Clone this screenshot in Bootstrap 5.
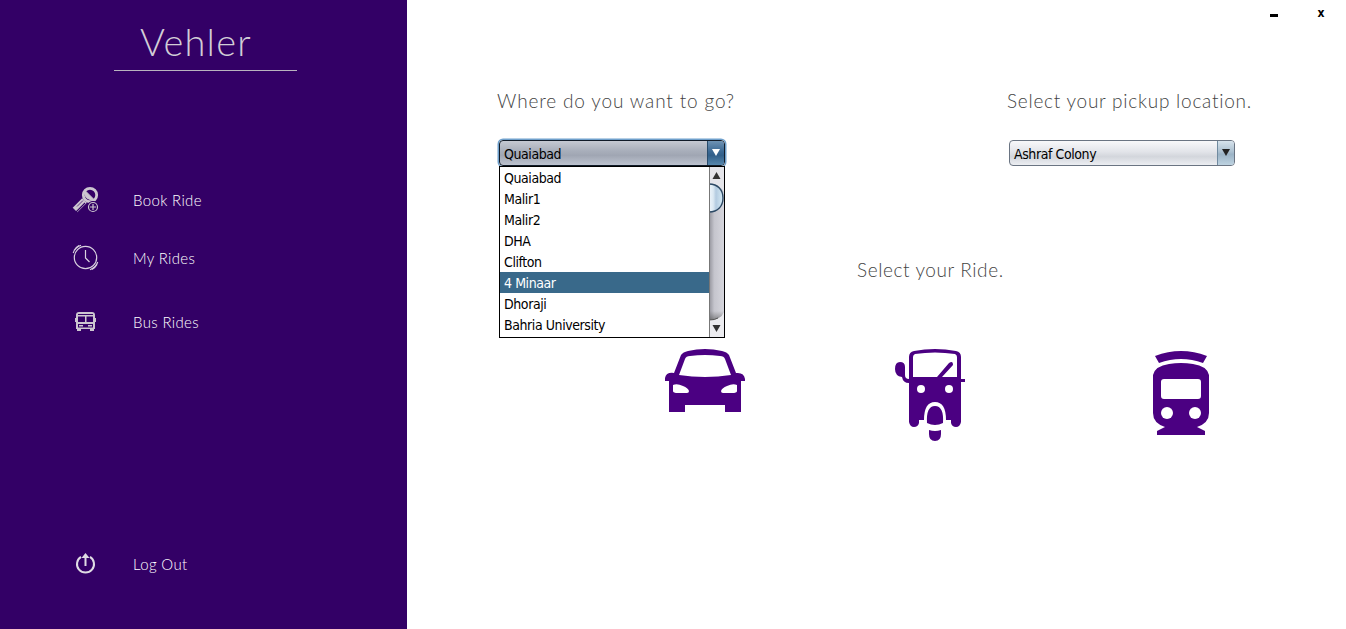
<!DOCTYPE html>
<html lang="en">
<head>
<meta charset="utf-8">
<meta name="viewport" content="width=device-width, initial-scale=1">
<title>Vehler</title>
<link href="https://cdn.jsdelivr.net/npm/bootstrap@5.3.0/dist/css/bootstrap.min.css" rel="stylesheet">
<style>
  body { font-family: Lato, "Liberation Sans", sans-serif; height: 629px; line-height: 1; }
  .sidebar { width: 407px; background: #330066; color: #fff; }
  .brand { width: 183px; height: 71px; margin-left: 114px; padding: 20px 0 0 26px; border-bottom: 1px solid #b9b3bf; color: #d2cdd6; font-size: 38px; line-height: 42px; font-weight: 300; letter-spacing: 1.2px; }
  .side-link { height: 28px; padding-left: 72px; color: #fff; font-size: 15px; font-weight: 300; letter-spacing: .35px; text-decoration: none; }
  .side-link svg { width: 28px; height: 28px; margin-right: 33px; flex: none; }
  .gap-a { margin-top: 115px; } .gap-b { margin-top: 30px; } .gap-c { margin-top: 36px; } .gap-d { margin-top: 214px; }
  .main-pane { min-width: 0; }
  .titlebar { height: 26px; padding-right: 20px; }
  .titlebar button { font: bold 12px/26px "DejaVu Sans Condensed", sans-serif; width: 10px; color: #000; }
  .btn-min { margin-right: 36px; }
  .min-mark { width: 8px; height: 3px; margin-top: 4px; background: #000; }
  .prompt { font-size: 19px; line-height: 24px; font-weight: 300; color: #444; white-space: nowrap; margin: 0; letter-spacing: .85px; }
  .prompt-pickup { letter-spacing: .75px; }
  .prompt-ride { padding-left: 450px; letter-spacing: .6px; }
  .fields { height: 232px; padding: 63px 0 0 90px; }
  .field { width: 510px; }
  .field-last { width: 250px; }
  .combo { width: 226px; height: 26px; margin: 27px 0 0 2px; border: 1px solid #6a7482; border-radius: 4px; background: linear-gradient(#f8f8fa, #e2e4e9 45%, #d3d6dc 65%, #eceef2); font: 14px/26px "DejaVu Sans Condensed", sans-serif; letter-spacing: -.42px; color: #000; padding-left: 4px; white-space: nowrap; }
  .combo .arrow { width: 17px; border-left: 1px solid #718ba0; border-radius: 0 3px 3px 0; background: linear-gradient(#d7e3ec, #abc0d0 45%, #9bb3c6 55%, #bed3e1); }
  .combo.is-open { border-color: #111b28; background: linear-gradient(#c5c9d2, #a9afbb 40%, #a0a6b3 60%, #bdc3cf); box-shadow: 0 0 0 1.5px #6fa0cc; }
  .combo.is-open .arrow { background: linear-gradient(#6f93b4, #396792 45%, #315f89 60%, #5687ad); border-color: #284b6b; }
  .options { top: 25px; left: -1px; width: 226px; height: 172px; border: 1px solid #000; background: #fff; z-index: 2; }
  .options li { height: 21px; line-height: 23px; padding-left: 4px; }
  .options li.chosen { background: #39698a; color: #fff; }
  .track { width: 15px; flex: none; }
  .rides { height: 94px; margin-top: 65px; padding-left: 258px; }
  .rides svg { fill: #4b0082; flex: none; }
  .ride-car { margin-top: 2px; } .ride-rickshaw { margin-left: 150px; } .ride-train { margin-left: 188px; }
</style>
</head>
<body class="d-flex overflow-hidden bg-white m-0">
<aside class="sidebar d-flex flex-column h-100 flex-shrink-0">
  <div class="brand">Vehler</div>
  <a class="side-link gap-a d-flex align-items-center" href="#">
    <svg viewBox="0 0 28 28"><g fill="none" stroke="#ccc6d0"><circle cx="18" cy="9" r="6.7" stroke-width="2.8" fill="#330066"/><path d="M13 4.5Q11 14 22.5 14L13 4.5z" fill="#ccc6d0"/><path d="M12.5 14.5L3 24" stroke-width="6.5"/><path d="M13 17L4 26" stroke="#330066" stroke-width="1.1"/><path d="M11 14.5L5 20.5" stroke="#330066" stroke-width=".7"/><circle cx="21" cy="21" r="5.6" fill="#330066" stroke="#330066"/><circle cx="21" cy="21" r="4.5" stroke-width="1.2"/><path d="M18 21h6M21 18v6" stroke-width="1.2"/></g></svg>
    <span>Book Ride</span></a>
  <a class="side-link gap-b d-flex align-items-center" href="#">
    <svg viewBox="0 0 28 28" fill="none" stroke="#d9d2df" stroke-width="1.2"><circle cx="13.5" cy="13.5" r="11.2"/><path d="M13.5 6v8l4 4M1.2 9Q3 3.5 9 1.3M2 6.5Q4 3 7 1.5M25.7 18Q24 23.5 18 25.7M25 20.5Q23 24 20 25.5"/></svg>
    <span>My Rides</span></a>
  <a class="side-link gap-c d-flex align-items-center" href="#">
    <svg viewBox="0 0 28 28"><path fill="#ccc6d0" fill-rule="evenodd" d="M7 4h13q3 0 3 3v3h1v4h-1v7h-1v2h-4v-2H9v2H5v-2H4v-7H3v-4h1V7q0-3 3-3zM6 6v1h15V6zM6 8.5V14h7V8.5zM14.5 8.5V14H21V8.5zM6 16v3.5h15V16zM7 17h4v1.5H7zM16 17h4v1.5h-4z"/></svg>
    <span>Bus Rides</span></a>
  <a class="side-link gap-d d-flex align-items-center" href="#">
    <svg viewBox="0 0 28 28"><path d="M9 6.9A8.5 8.5 0 1 0 18 6.9M13.5 16V6" fill="none" stroke="#e0dce4" stroke-width="2"/><path d="M13.5 3l4 5h-8z" fill="#e0dce4"/></svg>
    <span>Log Out</span></a>
</aside>
<main class="main-pane flex-grow-1">
  <div class="titlebar d-flex justify-content-end align-items-center">
    <button class="btn btn-min p-0 border-0 d-flex align-items-center" aria-label="Minimize"><span class="min-mark"></span></button>
    <button class="btn p-0 border-0">x</button>
  </div>
  <section class="fields d-flex">
    <div class="field flex-shrink-0">
      <h1 class="prompt">Where do you want to go?</h1>
      <div class="combo is-open position-relative d-flex justify-content-between">
        <span>Quaiabad</span>
        <span class="arrow d-flex align-items-center justify-content-center"><svg width="8" height="8"><path d="M0 0h8L4 7z" fill="#fff"/></svg></span>
        <div class="options position-absolute d-flex">
          <ul class="list-unstyled flex-grow-1 m-0">
            <li>Quaiabad</li><li>Malir1</li><li>Malir2</li><li>DHA</li><li>Clifton</li><li class="chosen">4 Minaar</li><li>Dhoraji</li><li>Bahria University</li>
          </ul>
          <svg class="track" viewBox="0 0 15 170" height="170">
            <defs>
              <linearGradient id="groove"><stop stop-color="#93939b"/><stop offset=".35" stop-color="#c5c5cd"/><stop offset="1" stop-color="#d6d6dd"/></linearGradient>
              <linearGradient id="thumb"><stop stop-color="#eef5fa"/><stop offset=".3" stop-color="#dce9f3"/><stop offset=".5" stop-color="#b3cbe0"/><stop offset="1" stop-color="#d6ebf6"/></linearGradient>
              <linearGradient id="foot" x2="0" y2="1"><stop stop-color="#555" stop-opacity="0"/><stop offset="1" stop-color="#444"/></linearGradient>
            </defs>
            <path d="M0 0h15v170H0z" fill="url(#groove)"/>
            <path d="M0 0h15v25Q11 17 0 17z" fill="#e5e5ea"/>
            <path d="M7.5 5l4 7h-8z" fill="#333"/>
            <path d="M0 17c9 0 14 6 14 14s-5 14-14 14" fill="url(#thumb)" stroke="#2c4964" stroke-width="1.4"/>
            <path d="M0 144h15v10H0z" fill="url(#foot)" opacity=".6"/>
            <path d="M0 153Q12 153 15 145V170H0z" fill="#ececf0"/>
            <path d="M0 153Q6 153 9 151" fill="none" stroke="#555"/>
            <path d="M3.5 158h8l-4 7z" fill="#333"/>
            <path d="M.5 0v170" stroke="#777" fill="none"/>
          </svg>
        </div>
      </div>
    </div>
    <div class="field-last flex-shrink-0">
      <h1 class="prompt prompt-pickup">Select your pickup location.</h1>
      <div class="combo d-flex justify-content-between">
        <span>Ashraf Colony</span>
        <span class="arrow d-flex align-items-center justify-content-center"><svg width="8" height="8"><path d="M0 0h8L4 7z" fill="#222"/></svg></span>
      </div>
    </div>
  </section>
  <h2 class="prompt prompt-ride">Select your Ride.</h2>
  <div class="rides d-flex align-items-start">
    <svg class="ride-car" width="80" height="64" viewBox="0 0 80 64"><path fill-rule="evenodd" d="M9 24L16 6Q18 3 23 2Q40-2 57 2Q62 3 64 6L71 24Q79 23 80 30V32H76V63H60V56H20V63H4V32H0V29Q1 23 9 24zM14 26Q40 30 66 26L60 10Q59 7 55 7Q40 5 25 7Q21 7 20 10zM8 36V42Q8 44 13 44H22Q24 44 24 42Q23 39 18 37Q12 34 8 36zM72 36Q68 34 62 37Q57 39 56 42Q56 44 58 44H67Q72 44 72 42z"/></svg>
    <svg class="ride-rickshaw" width="70" height="96" viewBox="0 0 70 96"><path fill-rule="evenodd" d="M14 10Q14 5 19 4Q40 0 61 4Q66 5 66 10V32H70V35H66V75Q65 80 61 80Q57 80 56 76V73H51Q51 55 40 55Q29 55 29 73H24V76Q23 80 19 80Q15 80 14 75V36Q8 36 7 30Q0 29 0 22Q0 15 5 15Q10 15 10 20V28Q10 32 14 32zM18 10V30H42L54 16Q58 13 58 18L47 30H62V10Q62 8 60 7Q40 4 20 7Q18 8 18 10z"/><circle cx="26" cy="42" r="4" fill="#fff"/><circle cx="54" cy="42" r="4" fill="#fff"/><path d="M32 76Q31 59 40 59Q49 59 48 76Q40 80 32 76zM34 83Q40 85 46 83V87Q46 94 40 94Q34 94 34 87z"/></svg>
    <svg class="ride-train" width="56" height="94" viewBox="0 0 56 94"><path fill-rule="evenodd" d="M2 9Q28-1 54 9L50 16Q28 8 6 16zM0 28Q2 19 16 17Q28 15 40 17Q54 19 56 28V66Q56 76 44 80L52 84V88H4V84L12 80Q0 76 0 66zM11 32Q8 32 8 35V49Q8 52 11 52H45Q48 52 48 49V35Q48 32 45 32z"/><circle cx="14" cy="66" r="6" fill="#fff"/><circle cx="42" cy="66" r="6" fill="#fff"/></svg>
  </div>
</main>
<script src="https://cdn.jsdelivr.net/npm/bootstrap@5.3.0/dist/js/bootstrap.bundle.min.js"></script>
</body>
</html>
